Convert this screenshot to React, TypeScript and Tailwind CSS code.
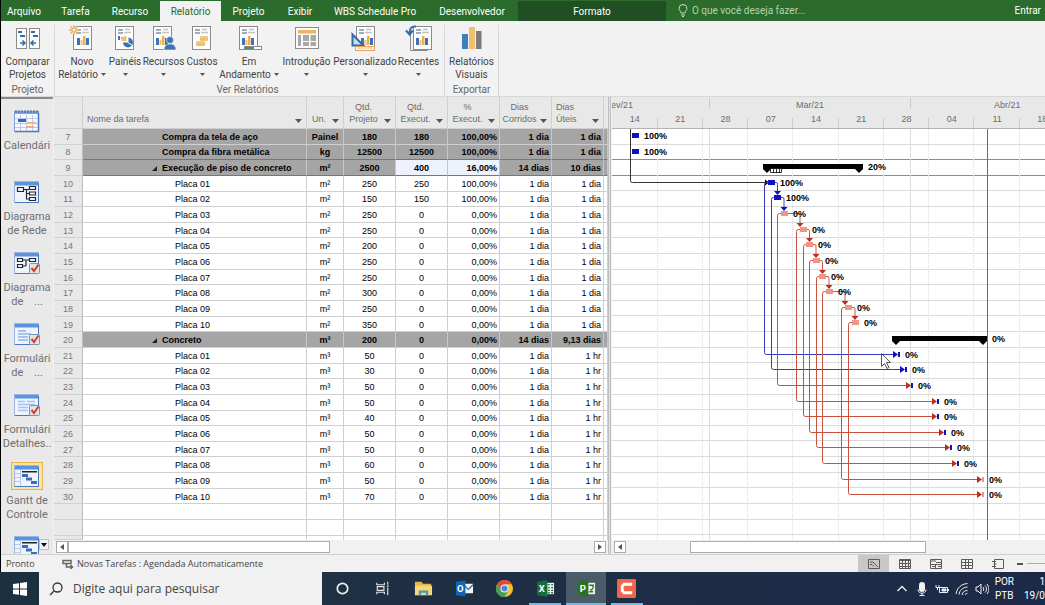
import clsx from 'clsx';
import React from 'react';

interface Task {
    id: number;
    name: string;
    unit: string;
    planned: string;
    done: string;
    percent: string;
    days: string;
    workDays: string;
    summary?: boolean;
    expandable?: boolean;
}

interface Bar {
    row: number;
    x: number;
    label: string;
    labelX: number;
    color: string;
}

const slab = (
    id: number,
    name: string,
    unit: string,
    planned: string,
    done: string,
    percent: string,
    workDays: string,
): Task => ({ id, name, unit, planned, done, percent, days: '1 dia', workDays });

const tasks: Task[] = [
    { ...slab(7, 'Compra da tela de aço', 'Painel', '180', '180', '100,00%', '1 dia'), summary: true },
    { ...slab(8, 'Compra da fibra metálica', 'kg', '12500', '12500', '100,00%', '1 dia'), summary: true },
    {
        id: 9,
        name: 'Execução de piso de concreto',
        unit: 'm²',
        planned: '2500',
        done: '400',
        percent: '16,00%',
        days: '14 dias',
        workDays: '10 dias',
        summary: true,
        expandable: true,
    },
    slab(10, 'Placa 01', 'm²', '250', '250', '100,00%', '1 dia'),
    slab(11, 'Placa 02', 'm²', '150', '150', '100,00%', '1 dia'),
    slab(12, 'Placa 03', 'm²', '250', '0', '0,00%', '1 dia'),
    slab(13, 'Placa 04', 'm²', '250', '0', '0,00%', '1 dia'),
    slab(14, 'Placa 05', 'm²', '200', '0', '0,00%', '1 dia'),
    slab(15, 'Placa 06', 'm²', '250', '0', '0,00%', '1 dia'),
    slab(16, 'Placa 07', 'm²', '250', '0', '0,00%', '1 dia'),
    slab(17, 'Placa 08', 'm²', '300', '0', '0,00%', '1 dia'),
    slab(18, 'Placa 09', 'm²', '250', '0', '0,00%', '1 dia'),
    slab(19, 'Placa 10', 'm²', '350', '0', '0,00%', '1 dia'),
    {
        id: 20,
        name: 'Concreto',
        unit: 'm³',
        planned: '200',
        done: '0',
        percent: '0,00%',
        days: '14 dias',
        workDays: '9,13 dias',
        summary: true,
        expandable: true,
    },
    slab(21, 'Placa 01', 'm³', '50', '0', '0,00%', '1 hr'),
    slab(22, 'Placa 02', 'm³', '30', '0', '0,00%', '1 hr'),
    slab(23, 'Placa 03', 'm³', '50', '0', '0,00%', '1 hr'),
    slab(24, 'Placa 04', 'm³', '50', '0', '0,00%', '1 hr'),
    slab(25, 'Placa 05', 'm³', '40', '0', '0,00%', '1 hr'),
    slab(26, 'Placa 06', 'm³', '50', '0', '0,00%', '1 hr'),
    slab(27, 'Placa 07', 'm³', '50', '0', '0,00%', '1 hr'),
    slab(28, 'Placa 08', 'm³', '60', '0', '0,00%', '1 hr'),
    slab(29, 'Placa 09', 'm³', '50', '0', '0,00%', '1 hr'),
    slab(30, 'Placa 10', 'm³', '70', '0', '0,00%', '1 hr'),
];

const BLUE = '#1010c0';
const LINK_BLUE = '#3a3ab8';
const PINK = '#f09488';
const RED = '#c8503f';
const DARK_RED = '#b8301f';

/* ---------- ribbon icons ---------- */

const Page: React.FC<{ x?: number }> = ({ x = 4 }) => (
    <g transform={`translate(${x} 1)`}>
        <rect x="0.5" y="0.5" width="18" height="23" fill="#fdfdfd" stroke="#8b8b8b" />
        <path d="M3 4h5M3 7h5" stroke="#7f93b3" strokeWidth="1.4" />
        <path d="M10 3.5h5M9 6.5h7" stroke="#c4c4c4" strokeWidth="1.4" />
    </g>
);

const Bars: React.FC<{ x?: number }> = ({ x = 7 }) => (
    <g transform={`translate(${x} 11)`}>
        <path d="M0 2h3v7H0z" fill="#3f72b4" />
        <path d="M3.5 4h2v5h-2z" fill="#f0c070" />
        <path d="M6 0h2.5v9H6z" fill="#e8b055" />
        <path d="M9 2h3v7H9z" fill="#3f72b4" />
    </g>
);

const RibbonSvg: React.FC<{ children: React.ReactNode }> = ({ children }) => (
    <svg viewBox="0 0 28 26" className="h-[26px] w-7 shrink-0" fill="none">
        {children}
    </svg>
);

const CompareIcon = () => (
    <RibbonSvg>
        <rect x="2.5" y="3.5" width="10" height="20" fill="#fdfdfd" stroke="#8b8b8b" />
        <rect x="15.5" y="3.5" width="10" height="20" fill="#fdfdfd" stroke="#8b8b8b" />
        <path d="M4 7h4M6 11h5M17 7h4M19 11h5" stroke="#2f6ba8" strokeWidth="2" />
        <path d="M6 18h5M8.5 15.5l2.5 2.5-2.5 2.5M22 18h-5M19.5 15.5L17 18l2.5 2.5" stroke="#2f6ba8" strokeWidth="1.5" />
    </RibbonSvg>
);

const NewReportIcon = () => (
    <RibbonSvg>
        <Page x={5} />
        <Bars x={9} />
        <circle cx="6" cy="5" r="4" fill="#f6efe2" />
        <path d="M6 0v10M1 5h10M2.5 1.5l7 7M9.5 1.5l-7 7" stroke="#eda958" strokeWidth="1.3" />
        <circle cx="6" cy="5" r="2" fill="#fff3dd" stroke="#eda958" />
    </RibbonSvg>
);

const DashboardIcon = () => (
    <RibbonSvg>
        <Page />
        <path d="M7 11h2v4H7z" fill="#3f72b4" />
        <path d="M10 12h2v2h-2z" fill="#e8b055" />
        <path d="M17 12.5a5 5 0 1 1-5 5h5z" fill="#3f72b4" />
        <path d="M15.5 11v5h-5a5 5 0 0 1 5-5z" fill="#f0c070" />
        <path d="M17 12v5.5l4.5 3" stroke="#fff" />
    </RibbonSvg>
);

const ResourcesIcon = () => (
    <RibbonSvg>
        <Page x={3} />
        <Bars x={6} />
        <circle cx="20" cy="15" r="3.5" fill="#3f72b4" stroke="#f3f3f3" strokeWidth="0.6" />
        <path d="M14 25c0-4 2.5-6 6-6s6 2 6 6z" fill="#3f72b4" stroke="#f3f3f3" strokeWidth="0.6" />
    </RibbonSvg>
);

const CostsIcon = () => (
    <RibbonSvg>
        <Page />
        <path d="M12 11h8v5h-8zM8 16h9v5H8z" fill="#f3cc80" />
        <path d="M12 14h8M8 19h9" stroke="#e5b45c" />
    </RibbonSvg>
);

const ProgressIcon = () => (
    <RibbonSvg>
        <Page />
        <Bars />
        <rect x="9.5" y="21.5" width="17" height="3" fill="#fff" stroke="#8b8b8b" />
        <path d="M10 22h9v2h-9z" fill="#4f8a72" />
    </RibbonSvg>
);

const GettingStartedIcon = () => (
    <RibbonSvg>
        <rect x="2.5" y="2.5" width="23" height="21" fill="#fdfdfd" stroke="#8b8b8b" />
        <path d="M5 5h18v3.5H5z" fill="#eab460" />
        <path d="M5 10h3v11H5zM10 10h6v6h-6zM17.5 10H23v6h-5.5zM10 17h6v4h-6zM17.5 17H23v4h-5.5z" fill="#a8a8a8" />
    </RibbonSvg>
);

const CustomIcon = () => (
    <RibbonSvg>
        <Page x={5} />
        <Bars x={10} />
        <path d="M1.5 9.5v11h11z" fill="#c9dcf2" stroke="#2f6ba8" strokeWidth="2" />
        <rect x="4.5" y="21.5" width="19" height="4" fill="#fdf3e3" stroke="#e5a45c" />
        <path d="M8 22v2M11 22v2M14 22v2M17 22v2M20 22v2" stroke="#e5a45c" strokeWidth="0.8" />
    </RibbonSvg>
);

const RecentIcon = () => (
    <RibbonSvg>
        <path d="M5.5 8v17.5h17" stroke="#8b8b8b" />
        <Page x={8} />
        <Bars x={11} />
        <path d="M11 1.5C7 1 4.5 3 4.5 8M1 5.5l3.5 4 3.5-4" stroke="#2f6ba8" strokeWidth="2" />
    </RibbonSvg>
);

const VisualIcon = () => (
    <RibbonSvg>
        <path d="M4 9h6v15H4z" fill="#3f7fbf" />
        <path d="M11 2h6v22h-6z" fill="#f0c070" />
        <path d="M18 6h5.5v18H18z" fill="#7b7b7b" />
    </RibbonSvg>
);

/* ---------- view bar icons ---------- */

const ViewSvg: React.FC<{ children: React.ReactNode; check?: boolean }> = ({ children, check }) => (
    <svg viewBox="0 0 26 24" className="h-6 w-[26px]" fill="none">
        <rect x="0.5" y="1.5" width="24" height="21" fill="#eef4fd" stroke="#9bb6de" />
        <path d="M1 2h23v3.5H1z" fill="#5c93e0" />
        <path d="M24.5 3v19.5H1" stroke="#4a78bd" />
        {children}
        {check && (
            <g>
                <rect x="15.5" y="12.5" width="10" height="10" rx="1" fill="#dfe3ea" stroke="#7e93b3" />
                <path d="M17.5 17l2.5 3 4.5-6.5" stroke="#c8432e" strokeWidth="2" />
            </g>
        )}
    </svg>
);

const CalendarIcon = () => (
    <svg viewBox="0 0 26 24" className="h-6 w-[26px]" fill="none">
        <rect x="0.5" y="2.5" width="24" height="20" fill="#f4f8fe" stroke="#7fa2d8" />
        <path d="M1 3h23v2H1z" fill="#79a5e2" />
        <path d="M2 1v3M5 1v3M8 1v3M11 1v3M14 1v3M17 1v3M20 1v3M23 1v3" stroke="#44679f" />
        <path d="M1 9.5h23M1 14.5h23M1 18.5h23M6.5 6v16M12.5 6v16M18.5 6v16" stroke="#b9cbe8" />
        <path d="M4 10h8v3H4z" fill="#3565b5" />
        <path d="M13 13h9v1h-9zM12 17h8v2h-8z" fill="#f0b070" />
        <path d="M24.5 4v18.5H1" stroke="#4a78bd" strokeWidth="1.5" />
    </svg>
);

const NetworkIcon = () => (
    <ViewSvg>
        <path d="M3.5 7.5h6v4h-6zM15.5 6.5h6v3h-6zM15.5 12h6v3h-6zM15.5 17.5h6v3h-6zM9.5 9.5h6M12.5 9.5v9.5h3M12.5 13.5h3" stroke="#26262b" strokeWidth="1.2" />
    </ViewSvg>
);

const NetworkCheckIcon = () => (
    <ViewSvg check>
        <path d="M3.5 7.5h5v3h-5zM3.5 13.5h5v3h-5zM15.5 7.5h6v3h-6zM8.5 9h7M12 9v6M8.5 15H12" stroke="#26262b" strokeWidth="1.2" />
    </ViewSvg>
);

const FormIcon = () => (
    <ViewSvg check>
        <path d="M4 9h8M4 12h13M4 15h10M4 18h10" stroke="#a8c3ec" strokeWidth="2" />
    </ViewSvg>
);

const FormDetailIcon = () => (
    <ViewSvg check>
        <path d="M4 8.5h7M13 8.5h8M4 11.5h17M4 14.5h10M4 17.5h10" stroke="#a8c3ec" strokeWidth="1.5" />
    </ViewSvg>
);

const GanttIcon = () => (
    <ViewSvg>
        <path d="M1 9.5h6M1 13.5h6M1 17.5h6M6.5 6v16" stroke="#b9cbe8" />
        <path d="M8 7h15v1.5H8z" fill="#222" />
        <path d="M8 10h6v3H8zM12 13.5h6v3h-6zM17 17h6v3h-6z" fill="#3c6cc0" />
    </ViewSvg>
);

/* ---------- data ---------- */

const tabs = [
    { label: 'Arquivo', className: 'w-[46px]' },
    { label: 'Tarefa', className: 'w-[57px]' },
    { label: 'Recurso', className: 'w-[52px]' },
    { label: 'Relatório', className: 'ml-1 w-[61px] bg-[#f2f2f2] text-[#2b6c2c]' },
    { label: 'Projeto', className: 'w-[55px]' },
    { label: 'Exibir', className: 'w-12' },
    { label: 'WBS Schedule Pro', className: 'w-[102px]' },
    { label: 'Desenvolvedor', className: 'w-[92px]' },
    { label: 'Formato', className: 'w-[148px] bg-[#1f4f23]' },
];

const reports = [
    { lines: ['Novo', 'Relatório'], icon: <NewReportIcon />, className: 'w-[54px]' },
    { lines: ['Painéis'], icon: <DashboardIcon />, className: 'w-8' },
    { lines: ['Recursos'], icon: <ResourcesIcon />, className: 'w-[45px]' },
    { lines: ['Custos'], icon: <CostsIcon />, className: 'w-8' },
    { lines: ['Em', 'Andamento'], icon: <ProgressIcon />, className: 'w-[62px]' },
    { lines: ['Introdução'], icon: <GettingStartedIcon />, className: 'w-[53px]' },
    { lines: ['Personalizado'], icon: <CustomIcon />, className: 'w-16' },
    { lines: ['Recentes'], icon: <RecentIcon />, className: 'w-[43px]' },
];

const views = [
    { lines: ['Calendári'], icon: <CalendarIcon /> },
    { lines: ['Diagrama', 'de Rede'], icon: <NetworkIcon /> },
    { lines: ['Diagrama', 'de    ...'], icon: <NetworkCheckIcon /> },
    { lines: ['Formulári', 'de    ...'], icon: <FormIcon /> },
    { lines: ['Formulári', 'Detalhes..'], icon: <FormDetailIcon /> },
    { lines: ['Gantt de', 'Controle'], icon: <GanttIcon />, active: true },
];

const columns = [
    { lines: ['Un.'], className: 'text-center' },
    { lines: ['Qtd.', 'Projeto'], className: 'text-center' },
    { lines: ['Qtd.', 'Execut.'], className: 'text-center' },
    { lines: ['%', 'Execut.'], className: 'text-center' },
    { lines: ['Dias', 'Corridos'], className: 'text-center' },
    { lines: ['Dias', 'Úteis'], className: 'pl-1 text-left' },
];

const Caret = () => (
    <svg viewBox="0 0 5 3" className="h-[3px] w-[5px] shrink-0">
        <path d="M0 0h5L2.5 3z" fill="#555" />
    </svg>
);

/* ---------- top of the window ---------- */

const TabBar = () => (
    <header className="flex h-[21px] shrink-0 items-stretch bg-[#2b6c2c] text-[10px] text-white">
        <nav className="flex pt-px">
            {tabs.map((tab) => (
                <button
                    key={tab.label}
                    className={clsx('flex items-center justify-center whitespace-nowrap', tab.className)}
                >
                    {tab.label}
                </button>
            ))}
        </nav>
        <label className="ml-3 flex flex-1 items-center gap-1 text-[#b5d3b3]">
            <svg viewBox="0 0 10 13" className="h-[13px] w-[10px]" fill="none" stroke="#c4dcc2">
                <path d="M3 9c0-2-2-2.5-2-4.5a4 4 0 0 1 8 0C9 6.5 7 7 7 9zM3 11h4M4 12.5h2" />
            </svg>
            <input
                aria-label="O que você deseja fazer"
                placeholder="O que você deseja fazer..."
                className="w-48 bg-transparent outline-none placeholder:text-[#b5d3b3]"
            />
        </label>
        <button className="pr-1">Entrar</button>
    </header>
);

const RibbonButton: React.FC<{
    lines: string[];
    icon: React.ReactNode;
    className: string;
    menu?: boolean;
}> = ({ lines, icon, className, menu }) => (
    <button className={clsx('flex flex-col items-center whitespace-nowrap', className)}>
        {icon}
        <span className="mt-1 leading-[13px]">{lines[0]}</span>
        <span className="flex h-[13px] items-center gap-[3px] leading-[13px]">
            {lines[1]}
            {menu && <Caret />}
        </span>
    </button>
);

const Ribbon = () => (
    <section className="flex h-[76px] shrink-0 border-b border-[#d8d8d8] bg-[#f2f2f2] pt-1 text-[10px] text-[#444]">
        <div className="flex w-[54px] flex-col items-center justify-between border-r border-[#d8d8d8]">
            <RibbonButton lines={['Comparar', 'Projetos']} icon={<CompareIcon />} className="w-full" />
            <span className="leading-[13px] text-[#666]">Projeto</span>
        </div>
        <div className="flex flex-col items-center justify-between border-r border-[#d8d8d8] pr-1">
            <div className="flex">
                {reports.map((report) => (
                    <RibbonButton key={report.lines[0]} {...report} menu />
                ))}
            </div>
            <span className="leading-[13px] text-[#666]">Ver Relatórios</span>
        </div>
        <div className="flex w-[54px] flex-col items-center justify-between border-r border-[#d8d8d8]">
            <RibbonButton lines={['Relatórios', 'Visuais']} icon={<VisualIcon />} className="w-full" />
            <span className="leading-[13px] text-[#666]">Exportar</span>
        </div>
    </section>
);

/* ---------- view bar ---------- */

const ViewBar = () => (
    <aside className="relative flex w-[52px] shrink-0 flex-col overflow-hidden border-t-2 border-[#8a8a8a] bg-[#e9e9e9] pt-2 text-[11px] text-[#707070]">
        {views.map((view, index) => (
            <button key={index} className="flex h-[71px] shrink-0 flex-col items-center gap-1">
                <span
                    className={clsx(
                        'flex h-7 w-8 items-center justify-center border',
                        view.active ? 'border-[#e3b84e] bg-[#fbe3a0]' : 'border-transparent',
                    )}
                >
                    {view.icon}
                </span>
                <span className="leading-[14px] whitespace-pre">{view.lines.join('\n')}</span>
            </button>
        ))}
        <button aria-label="Gráfico de Gantt" className="flex h-7 shrink-0 items-center justify-center">
            <GanttIcon />
        </button>
        <button
            aria-label="Mais modos"
            className="absolute right-1 bottom-1 flex h-[11px] w-[10px] items-center justify-center border border-[#c0c0c0] bg-[#f2f2f2]"
        >
            <svg viewBox="0 0 6 4" className="h-1 w-[6px] shrink-0">
                <path d="M0 0h6L3 4z" fill="#111" />
            </svg>
        </button>
    </aside>
);

/* ---------- task table ---------- */

const TaskRow: React.FC<{ task: Task }> = ({ task }) => {
    const current = task.id === 9;
    const cell = clsx(
        'border-r border-b p-0 pt-px',
        task.summary ? 'border-r-[#c6c6c6] bg-[#a5a5a5] font-bold' : 'border-r-[#d0d0d0] bg-white',
        current || task.id === 8 ? 'border-b-[#777]' : 'border-b-[#d0d0d0]',
    );
    const picked = current && 'bg-[#edf2fd]';

    return (
        <tr className="whitespace-nowrap">
            <th className="border-r border-b border-r-[#bdbdbd] border-b-[#d0d0d0] bg-[#e8e8e8] p-0 pt-px text-center font-normal text-[#777]">
                {task.id}
            </th>
            <td className={cell}>
                <span className={clsx('flex items-center', task.summary ? 'pl-[69px]' : 'pl-[82px]')}>
                    <span className="w-[10px]">
                        {task.expandable && (
                            <svg viewBox="0 0 5 5" className="h-[5px] w-[5px]">
                                <path d="M5 0v5H0z" fill="#222" />
                            </svg>
                        )}
                    </span>
                    {task.name}
                </span>
            </td>
            <td className={clsx(cell, 'text-center')}>{task.unit}</td>
            <td className={clsx(cell, 'text-center')}>{task.planned}</td>
            <td className={clsx(cell, 'text-center', picked)}>{task.done}</td>
            <td className={clsx(cell, 'pr-0.5 text-right', picked)}>{task.percent}</td>
            <td className={clsx(cell, 'pr-0.5 text-right')}>{task.days}</td>
            <td className={clsx(cell, 'pr-0.5 text-right')}>{task.workDays}</td>
            <td className={cell} />
        </tr>
    );
};

const BlankRow: React.FC<{ last?: boolean }> = ({ last }) => (
    <tr className={clsx(last && 'h-1')}>
        <th className="border-r border-b border-r-[#bdbdbd] border-b-[#d0d0d0] bg-[#e8e8e8] p-0 pt-px">
            {!last && '\u00a0'}
        </th>
        {Array.from({ length: 8 }, (_, index) => (
            <td
                key={index}
                className={clsx('border-r border-[#d0d0d0] bg-white p-0', !last && 'border-b')}
            />
        ))}
    </tr>
);

const HeaderArrow = () => (
    <svg viewBox="0 0 7 4" className="absolute right-1 bottom-[5px] h-1 w-[7px]">
        <path d="M0 0h7L3.5 4z" fill="#555" />
    </svg>
);

const TaskTable = () => (
    <table className="h-full w-full table-fixed border-separate border-spacing-0 text-[9px] leading-[12px] text-black">
        <colgroup>
            <col className="w-[29px]" />
            <col />
            <col className="w-[37px]" />
            <col className="w-[52px]" />
            <col className="w-[52px]" />
            <col className="w-[52px]" />
            <col className="w-[52px]" />
            <col className="w-[52px]" />
            <col className="w-1" />
        </colgroup>
        <thead className="bg-[#e8e8e8] text-[#6c6c6c]">
            <tr className="h-8 align-bottom">
                <th className="border-r border-b border-[#cfcfcf] p-0" />
                <th className="relative border-r border-b border-[#cfcfcf] p-0 pb-[3px] pl-1 text-left font-normal">
                    Nome da tarefa
                    <HeaderArrow />
                </th>
                {columns.map((column, index) => (
                    <th
                        key={index}
                        className={clsx(
                            'relative border-r border-b border-[#cfcfcf] pt-0 pr-3 pb-[3px] font-normal',
                            column.className,
                        )}
                    >
                        {column.lines.map((line) => (
                            <span key={line} className="block">
                                {line}
                            </span>
                        ))}
                        <HeaderArrow />
                    </th>
                ))}
                <th className="border-b border-[#cfcfcf] p-0" />
            </tr>
        </thead>
        <tbody>
            {tasks.map((task) => (
                <TaskRow key={task.id} task={task} />
            ))}
            <BlankRow />
            <BlankRow />
            <BlankRow last />
        </tbody>
    </table>
);

/* ---------- gantt chart ---------- */

const HEAD = 32;
const ROW = 15.62;
const WEEK = 45.28;
const FIRST_WEEK = 45.5;

const rowTop = (id: number) => HEAD + (id - 7) * ROW;
const mid = (id: number) => rowTop(id) + 6;

const weeks = ['14', '21', '28', '07', '14', '21', '28', '04', '11', '18'];

const bars: Bar[] = [
    { row: 7, x: 20, label: '100%', labelX: 32, color: BLUE },
    { row: 8, x: 20, label: '100%', labelX: 32, color: BLUE },
    { row: 10, x: 156, label: '100%', labelX: 168, color: BLUE },
    { row: 11, x: 162, label: '100%', labelX: 174, color: BLUE },
    { row: 12, x: 169, label: '0%', labelX: 181, color: PINK },
    { row: 13, x: 188, label: '0%', labelX: 200, color: PINK },
    { row: 14, x: 194, label: '0%', labelX: 206, color: PINK },
    { row: 15, x: 201, label: '0%', labelX: 213, color: PINK },
    { row: 16, x: 207, label: '0%', labelX: 219, color: PINK },
    { row: 17, x: 214, label: '0%', labelX: 226, color: PINK },
    { row: 18, x: 233, label: '0%', labelX: 245, color: PINK },
    { row: 19, x: 240, label: '0%', labelX: 252, color: PINK },
];

// link from the end of a slab to the top of the next one
const drops = [
    { from: 10, start: 163, x: 165.5, color: BLUE },
    { from: 11, start: 169, x: 172, color: BLUE },
    { from: 12, start: 176, x: 188, color: DARK_RED },
    { from: 13, start: 195, x: 197.5, color: DARK_RED },
    { from: 14, start: 201, x: 204, color: DARK_RED },
    { from: 15, start: 208, x: 210.5, color: DARK_RED },
    { from: 16, start: 214, x: 217, color: DARK_RED },
    { from: 17, start: 221, x: 233, color: DARK_RED },
    { from: 18, start: 240, x: 243, color: DARK_RED },
];

// link from a slab to its concrete delivery
const feeds = [
    { from: 10, to: 21, x: 152.5, tip: 285, line: LINK_BLUE, head: BLUE, bar: BLUE },
    { from: 11, to: 22, x: 159.5, tip: 292, line: LINK_BLUE, head: BLUE, bar: BLUE },
    { from: 12, to: 23, x: 165.5, tip: 298, line: RED, head: DARK_RED, bar: BLUE },
    { from: 13, to: 24, x: 184.5, tip: 324, line: RED, head: DARK_RED, bar: BLUE },
    { from: 14, to: 25, x: 191.5, tip: 324, line: RED, head: DARK_RED, bar: BLUE },
    { from: 15, to: 26, x: 197.5, tip: 331, line: RED, head: DARK_RED, bar: BLUE },
    { from: 16, to: 27, x: 204.5, tip: 337, line: RED, head: DARK_RED, bar: BLUE },
    { from: 17, to: 28, x: 210.5, tip: 344, line: RED, head: DARK_RED, bar: BLUE },
    { from: 18, to: 29, x: 229.5, tip: 369, line: RED, head: DARK_RED, bar: PINK },
    { from: 19, to: 30, x: 236.5, tip: 369, line: RED, head: DARK_RED, bar: PINK },
];

const Summary: React.FC<{ row: number; x: number; width: number; label: string }> = ({
    row,
    x,
    width,
    label,
}) => {
    const y = Math.round(mid(row)) - 2;
    return (
        <g>
            <path
                d={`M${x} ${y}h${width}v5l-4 4l-4 -4H${x + 8}l-4 4l-4 -4z`}
                fill="#000"
            />
            <text x={x + width + 5} y={y + 6} className="font-bold">
                {label}
            </text>
        </g>
    );
};

const GanttChart = () => (
    <svg className="block h-full w-full bg-white text-[9px]" fill="none" role="img" aria-label="Gantt de Controle">
        {/* grid */}
        {Array.from({ length: 26 }, (_, index) => (
            <path
                key={index}
                d={`M0 ${Math.round(rowTop(index + 8)) - 0.5}h4000`}
                stroke={index === 1 || index === 2 ? '#8c8c8c' : '#dadada'}
            />
        ))}
        {Array.from({ length: 80 }, (_, index) => (
            <path
                key={index}
                d={`M${Math.round(FIRST_WEEK + index * WEEK) - 0.5} ${HEAD}v2000`}
                stroke="#dcdcdc"
                strokeDasharray="1 1"
            />
        ))}
        <path d={`M97.5 ${HEAD}v2000M298.5 ${HEAD}v2000`} stroke="#dcdcdc" />

        {/* time scale */}
        <rect width="100%" height={HEAD} fill="#e8e8e8" />
        <path d={`M0 ${HEAD - 0.5}h4000`} stroke="#b4b4b4" />
        <path d="M97.5 1v10M298.5 1v10" stroke="#c8c8c8" />
        <g fill="#6c6c6c">
            <text x="-1" y="11">ev/21</text>
            <text x="184" y="11">Mar/21</text>
            <text x="382" y="11">Abr/21</text>
            {weeks.map((week, index) => (
                <text key={index} x={FIRST_WEEK + (index - 0.5) * WEEK} y="25" textAnchor="middle">
                    {week}
                </text>
            ))}
        </g>
        {weeks.map((week, index) => (
            <path
                key={index}
                d={`M${Math.round(FIRST_WEEK + index * WEEK) - 0.5} 21v10`}
                stroke="#cdcdcd"
            />
        ))}

        {/* links */}
        <path d={`M18.5 ${HEAD}V${Math.round(mid(10)) - 1.5}q0 2 2 2H153`} stroke="#333" />
        <path d={`M153 ${Math.round(mid(10)) - 2.5}l4 3l-4 3z`} fill="#000" />
        {feeds.map((feed) => {
            const y = Math.round(mid(feed.to)) + 0.5;
            const top = Math.round(mid(feed.from)) + 0.5;
            return (
                <g key={feed.to}>
                    <path
                        d={`M${feed.x + 4} ${top}h-2q-2 0 -2 2V${y - 2}q0 2 2 2H${feed.tip - 4}`}
                        stroke={feed.line}
                    />
                    <path d={`M${feed.tip - 4} ${y - 3.5}l5 3.5l-5 3.5z`} fill={feed.head} />
                    <rect x={feed.tip + 1} y={y - 2.5} width="2" height="5" fill={feed.bar} />
                    <text x={feed.tip + 8} y={y + 3.5} fill="#000" className="font-bold">
                        0%
                    </text>
                </g>
            );
        })}
        {drops.map((drop) => {
            const y = Math.round(mid(drop.from)) + 0.5;
            const end = Math.round(mid(drop.from + 1)) - 3;
            return (
                <g key={drop.from}>
                    <path
                        d={`M${drop.start} ${y}H${drop.x - 1}q1 0 1 2V${end}`}
                        stroke={drop.color}
                        strokeOpacity="0.8"
                    />
                    <path d={`M${drop.x - 3.5} ${end - 3}h7l-3.5 4z`} fill={drop.color} />
                </g>
            );
        })}

        {/* bars */}
        {bars.map((bar) => {
            const y = Math.round(mid(bar.row)) - 2;
            return (
                <g key={bar.row}>
                    <rect x={bar.x} y={y} width="7" height="5" fill={bar.color} />
                    <text x={bar.labelX} y={y + 6} fill="#000" className="font-bold">
                        {bar.label}
                    </text>
                </g>
            );
        })}
        <g fill="#000">
            <Summary row={9} x={151} width={100} label="20%" />
            <Summary row={20} x={280} width={95} label="0%" />
        </g>
        <path d="M158.5 71.5h11v4h-11zM161.5 72v4M164.5 72v4M167.5 72v4" fill="#fff" stroke="#000" strokeWidth="0.8" />

        {/* status date */}
        <rect x="375" y={HEAD} width="1" height="2000" fill="#d8432f" />

        {/* pointer */}
        <path
            d="M269.5 256.5v13l3-3 2.5 5 2-1-2.5-5h4z"
            fill="#fff"
            stroke="#333"
            strokeWidth="0.8"
        />
    </svg>
);

/* ---------- scrollbars ---------- */

const ScrollButton: React.FC<{ label: string; flip?: boolean }> = ({ label, flip }) => (
    <button
        aria-label={label}
        className="flex h-3 w-3 shrink-0 items-center justify-center border border-[#ababab] bg-white"
    >
        <svg viewBox="0 0 4 6" className={clsx('h-[6px] w-1', flip && 'rotate-180')}>
            <path d="M4 0v6L0 3z" fill="#555" />
        </svg>
    </button>
);

/* ---------- bottom of the window ---------- */

const viewButtons = [
    { label: 'Gráfico de Gantt', path: 'M1.5 1.5h11v9h-11zM3 4h3l5 5M3 6.5h2l2 2', active: true },
    { label: 'Uso da Tarefa', path: 'M1.5 1.5h11v9h-11zM1 2.5h12M1 5.5h12M1 8.5h12M4.5 3v7M7.5 3v7M10.5 3v7' },
    { label: 'Planejador de Equipe', path: 'M1.5 1.5h11v9h-11zM1 6.5h12M2 3h5M7 4.5h5M3 8.5h3M6.5 7v3M9 8.5h3' },
    { label: 'Planilha de Recursos', path: 'M1.5 1.5h11v9h-11zM1 4.5h12M1 7.5h12M5.5 1v10M8.5 1v10' },
    { label: 'Relatório', path: 'M3.5 1.5h9v9h-9zM1 3.5h4M1 8.5h4M2.5 6h3' },
];

const StatusBar = () => (
    <footer className="flex h-[18px] shrink-0 items-center border-t border-[#cfcfcf] bg-[#f1f1f1] font-['Open_Sans','Noto_Sans',sans-serif] text-[9px] text-[#444]">
        <span className="w-[57px] pl-[5px]">Pronto</span>
        <button className="ml-1 flex items-center gap-[3px]">
            <svg viewBox="0 0 12 10" className="h-[10px] w-3" fill="none" stroke="#666">
                <path d="M1 1.5h8v3H1zM4.5 5v3h6M8.5 6l2 2-2 2" strokeWidth="1.5" />
            </svg>
            Novas Tarefas : Agendada Automaticamente
        </button>
        <div className="ml-auto flex h-full">
            {viewButtons.map((button) => (
                <button
                    key={button.label}
                    aria-label={button.label}
                    className={clsx('flex w-[31px] items-center justify-center', button.active && 'bg-[#c8c8c8]')}
                >
                    <svg viewBox="0 0 14 12" className="h-3 w-[14px]" fill="none" stroke="#5a5a5a">
                        <path d={button.path} />
                    </svg>
                </button>
            ))}
        </div>
        <button aria-label="Reduzir" className="ml-1 h-0.5 w-[6px] bg-[#555]" />
        <span className="ml-1 h-px w-[18px] bg-[#aaa]" />
    </footer>
);

const apps = [
    {
        label: 'Cortana',
        icon: <circle cx="10" cy="10" r="5.5" stroke="#f0f0f0" strokeWidth="1.8" />,
    },
    {
        label: 'Visão de Tarefas',
        icon: <path d="M4 4v2h8V4M4 16v-2h8v2M4.5 8h7v4h-7zM15.5 3v3M15.5 9v8M14.5 7.5h2" stroke="#e4e4e4" strokeWidth="1.2" />,
    },
    {
        label: 'Explorador de Arquivos',
        icon: (
            <>
                <path d="M1 3h7l1.5 2H18v12H1z" fill="#e8b53e" />
                <path d="M1 7h18v10H1z" fill="#f8d775" />
                <path d="M5 17v-5h10v5h-2.5v-2.5h-5V17z" fill="#4a95c4" />
            </>
        ),
    },
    {
        label: 'Outlook',
        icon: (
            <>
                <path d="M9 5h10v10H9z" fill="#f4f4f4" />
                <path d="M10 7l4 4 5-5" stroke="#1769b5" strokeWidth="1.3" />
                <path d="M1 3l10-1.5v17L1 17z" fill="#0f66b8" />
                <text x="2" y="13.5" fill="#fff" className="text-[10px] font-bold">O</text>
            </>
        ),
    },
    {
        label: 'Google Chrome',
        icon: (
            <>
                <circle cx="10" cy="10" r="9" fill="#f2c230" />
                <path d="M10 5.5h7.8a9 9 0 0 0-15.6 0L6 12z" fill="#dd4b3e" />
                <path d="M2.2 5.5A9 9 0 0 0 10 19l4-7-4 2-4-2z" fill="#3fa257" />
                <circle cx="10" cy="10" r="4.2" fill="#f5f5f5" />
                <circle cx="10" cy="10" r="3.2" fill="#4a86e0" />
            </>
        ),
    },
    {
        label: 'Excel',
        running: true,
        icon: (
            <>
                <rect x="10" y="4" width="9" height="12" fill="#eef4ef" />
                <path d="M12.5 6h2M16 6h2M12.5 9h2M16 9h2M12.5 12h2M16 12h2M12.5 14.5h2M16 14.5h2" stroke="#1f6e43" strokeWidth="1.4" />
                <path d="M1 3l11-2v18L1 17z" fill="#1a6b3c" />
                <text x="3" y="13.5" fill="#fff" className="text-[10px] font-bold">X</text>
            </>
        ),
    },
    {
        label: 'Project',
        running: true,
        active: true,
        icon: (
            <>
                <rect x="10" y="4" width="9" height="12" fill="#eef4ef" />
                <path d="M13 6.500h4v3M17 10l-3 2M13 13.500h4" stroke="#2f6f1f" strokeWidth="1.5" />
                <path d="M1 3l11-2v18L1 17z" fill="#2f6f1f" />
                <text x="3" y="13.5" fill="#fff" className="text-[10px] font-bold">P</text>
            </>
        ),
    },
    {
        label: 'Camtasia',
        running: true,
        icon: (
            <>
                <rect x="0" y="0" width="20" height="20" rx="1.5" fill="#f0644a" />
                <path d="M16 5.5H7.5L5.5 7.5v5L7.5 14.500H16" stroke="#fff" strokeWidth="3" />
            </>
        ),
    },
];

const TraySvg: React.FC<{ children: React.ReactNode }> = ({ children }) => (
    <svg viewBox="0 0 14 14" className="h-[14px] w-[14px]" fill="none" stroke="#f0f0f0">
        {children}
    </svg>
);

const Taskbar = () => (
    <div className="flex h-[33px] shrink-0 overflow-hidden bg-linear-to-r from-[#203340] to-[#1c2a48] text-white">
        <button aria-label="Iniciar" className="flex w-[39px] shrink-0 items-center justify-center bg-[#1b313f]">
            <svg viewBox="0 0 14 14" className="h-[14px] w-[14px]" fill="#fff">
                <path d="M0 2l6-.8v5.3H0zM7 1l7-1v6.5H7zM0 7.5h6v5.3L0 12zM7 7.5h7V14l-7-1z" />
            </svg>
        </button>
        <label className="flex w-[283px] shrink-0 items-center gap-[10px] bg-[#f1f1f1] pl-[10px]">
            <svg viewBox="0 0 14 14" className="h-[14px] w-[14px]" fill="none" stroke="#333" strokeWidth="1.3">
                <circle cx="8.5" cy="5.5" r="4.5" />
                <path d="M5 9L1 13" />
            </svg>
            <input
                aria-label="Pesquisar"
                placeholder="Digite aqui para pesquisar"
                className="w-56 bg-transparent font-['Open_Sans','Noto_Sans',sans-serif] text-[12px] outline-none placeholder:text-[#444]"
            />
        </label>
        <div className="flex w-[325px] shrink-0">
            {apps.map((app) => (
                <button
                    key={app.label}
                    aria-label={app.label}
                    className={clsx(
                        'flex flex-1 flex-col items-center justify-between pt-[7px]',
                        app.active && 'bg-[#4a5c69]',
                    )}
                >
                    <svg viewBox="0 0 20 20" className="h-[19px] w-[19px]" fill="none">
                        {app.icon}
                    </svg>
                    <span className={clsx('h-0.5', app.active ? 'w-full' : 'w-8', app.running && 'bg-[#76b5ea]')} />
                </button>
            ))}
        </div>
        <div className="ml-auto flex shrink-0 items-center gap-[6px] text-[10px] leading-[14px]">
            <TraySvg>
                <path d="M2.5 9L7 4.5 11.5 9" strokeWidth="1.3" />
            </TraySvg>
            <TraySvg>
                <rect x="4.5" y="0.5" width="5" height="9" rx="2" fill="#f0f0f0" />
                <path d="M3 7.5c0 5 8 5 8 0M7 11v2.5M4.5 13.5h5" />
            </TraySvg>
            <TraySvg>
                <path d="M4.5 5.5h8v5h-8zM13.5 7v2M1 3v2.5h3V3M2.5 5.5V8" />
                <path d="M7 7h4v2H7z" fill="#f0f0f0" />
            </TraySvg>
            <TraySvg>
                <path d="M1 12C2 6 6 2 12.5 1.5M4 12.5c.5-4 3.5-7 8.5-7.5M7 13c.5-3 2.5-4.5 5.5-4.5M10 13c.3-1 1-1.5 2.5-1.5" />
            </TraySvg>
            <TraySvg>
                <path d="M1 5h2l3-3v10L3 9H1zM8 5c1 1 1 3 0 4M10 3.5c2 2 2 5 0 7M12 2c2.5 3 2.5 7 0 10" />
            </TraySvg>
            <button className="text-center">
                POR
                <br />
                PTB
            </button>
            <time className="pl-1 text-right">
                1
                <br />
                19/0
            </time>
        </div>
    </div>
);

export default function App() {
    return (
        <div className="flex h-screen flex-col overflow-hidden bg-[#f1f1f1] font-[Roboto,'Open_Sans',sans-serif]">
            <div className="flex min-h-0 flex-1 flex-col border-l border-black">
                <TabBar />
                <Ribbon />
                <main className="flex min-h-0 flex-1 gap-px">
                    <ViewBar />
                    <section className="flex w-[554px] shrink-0 flex-col font-['Liberation_Sans',Arial,sans-serif]">
                        <div className="min-h-0 flex-1">
                            <TaskTable />
                        </div>
                        <div className="flex h-[14px] shrink-0 items-center bg-[#f1f1f1] px-0.5">
                            <ScrollButton label="Rolar para a esquerda" />
                            <span className="h-3 w-[262px] border border-[#ababab] bg-white" />
                            <span className="flex-1" />
                            <ScrollButton label="Rolar para a direita" flip />
                        </div>
                    </section>
                    <div className="-ml-px w-[3px] shrink-0 border-x border-[#bcbcbc] bg-[#e4e4e4]" />
                    <section className="flex min-w-0 flex-1 flex-col font-['Liberation_Sans',Arial,sans-serif]">
                        <div className="min-h-0 flex-1 overflow-hidden">
                            <GanttChart />
                        </div>
                        <div className="flex h-[14px] shrink-0 items-center bg-[#f1f1f1] pl-0.5">
                            <ScrollButton label="Rolar para a esquerda" />
                            <span className="ml-16 h-3 w-[236px] border border-[#ababab] bg-white" />
                        </div>
                    </section>
                </main>
                <StatusBar />
            </div>
            <Taskbar />
        </div>
    );
}
